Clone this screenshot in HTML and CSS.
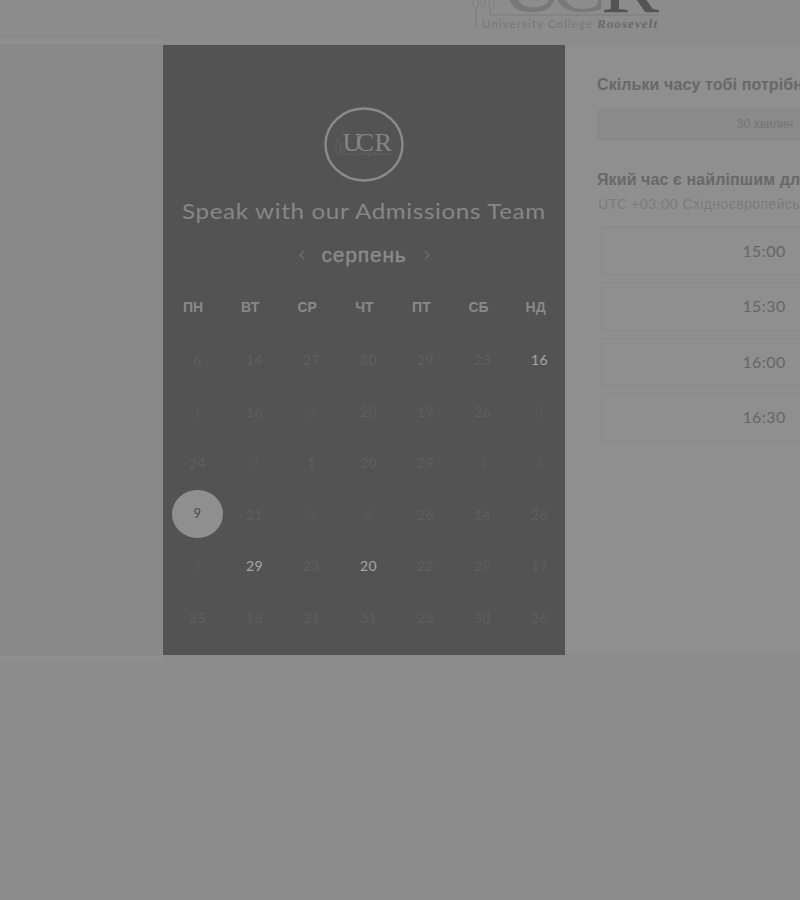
FILE: index.html
```
<!DOCTYPE html>
<html lang="uk">
<head>
<meta charset="utf-8">
<title>Speak with our Admissions Team</title>
<link rel="stylesheet" href="styles.css">
</head>
<body>
<header class="header">
  <svg class="brand" width="200" height="38" viewBox="0 0 200 38">
    <g class="brand-line">
      <path d="M3 0v5q2 5 5 1V0M11 0v6q3 3 4-1V0M19 0v7q3 3 5-1V0M6 8v21M20 8v7h168"/>
    </g>
    <text class="brand-light" x="29" y="11" font-size="82" textLength="66" lengthAdjust="spacingAndGlyphs">U</text>
    <text class="brand-light" x="80" y="11" font-size="82" textLength="56" lengthAdjust="spacingAndGlyphs">C</text>
    <text class="brand-dark" x="131" y="11.5" font-size="82" textLength="58" lengthAdjust="spacingAndGlyphs">R</text>
    <text class="brand-name" x="12" y="27.5" textLength="110">University College</text>
    <text class="brand-roosevelt" x="127" y="27.5" textLength="60">Roosevelt</text>
  </svg>
</header>
<main class="booking">
  <aside class="side"></aside>
  <section class="calendar">
    <svg class="avatar" width="80" height="76" viewBox="0 0 80 76">
      <ellipse cx="40" cy="37.500" rx="38.500" ry="36"/>
      <path class="avatar-mark" d="M12 45v-9l2-5 2 5v9M17 45v-6l2-3 1 3v6"/>
      <text class="avatar-text" x="18.500" y="43.500" textLength="19" lengthAdjust="spacingAndGlyphs">U</text>
      <text class="avatar-text" x="32" y="43.500" textLength="18" lengthAdjust="spacingAndGlyphs">C</text>
      <text class="avatar-text" x="50.500" y="43.500" textLength="17.500" lengthAdjust="spacingAndGlyphs">R</text>
      <text class="avatar-sub" x="14" y="48" textLength="53">University College Roosevelt</text>
    </svg>
    <h1 class="title"><span>Speak with our Admissions Team</span></h1>
    <div class="month">
      <svg width="8" height="12" viewBox="0 0 8 12"><path d="M6 2L2 6l4 4"/></svg>
      <span class="month-name">серпень</span>
      <svg width="8" height="12" viewBox="0 0 8 12"><path d="M2 2l4 4-4 4"/></svg>
    </div>
    <div class="weekdays"><span>ПН</span><span>ВТ</span><span>СР</span><span>ЧТ</span><span>ПТ</span><span>СБ</span><span>НД</span></div>
    <div class="days">
      <span>6</span><span>14</span><span>27</span><span>30</span><span>29</span><span>23</span><span class="open">16</span>
      <span class="faint">1</span><span>16</span><span class="faint">5</span><span>20</span><span>19</span><span>26</span><span class="faint">3</span>
      <span>24</span><span class="faint">2</span><span>1</span><span>20</span><span>29</span><span class="faint">4</span><span class="faint">4</span>
      <span class="selected"><b>9</b></span><span>21</span><span class="faint">3</span><span class="faint">2</span><span>26</span><span>14</span><span>26</span>
      <span class="faint">5</span><span class="open">29</span><span>23</span><span class="open">20</span><span>22</span><span>29</span><span>17</span>
      <span>25</span><span>18</span><span>21</span><span>31</span><span>23</span><span>30</span><span>26</span>
    </div>
  </section>
  <section class="times">
    <h2 class="question">Скільки часу тобі потрібно?</h2>
    <div class="duration">30 хвилин</div>
    <h2 class="question">Який час є найліпшим для тебе?</h2>
    <div class="zone"><span class="utc">UTC +03:00</span> Східноєвропейський час</div>
    <div class="slots">
      <div class="slot">15:00</div>
      <div class="slot">15:30</div>
      <div class="slot">16:00</div>
      <div class="slot">16:30</div>
    </div>
  </section>
</main>
</body>
</html>
```
FILE: styles.css
```
* { box-sizing: border-box; }
body {
  margin: 0;
  width: 800px;
  height: 900px;
  overflow: hidden;
  background: #8c8c8c;
  font-family: Lato, "Liberation Sans", sans-serif;
}
.header { height: 45px; padding-left: 470px; overflow: hidden; }
.brand { display: block; font-family: "Liberation Serif", serif; }
.brand-line { fill: none; stroke: #7d7d7d; stroke-width: 1; }
.brand-light { fill: #787878; }
.brand-dark { fill: #545454; }
.brand-name { fill: #777; font: 11.5px Lato, sans-serif; }
.brand-roosevelt { fill: #696969; font: italic bold 13px "Liberation Serif", serif; }

.booking { display: flex; width: 800px; height: 610px; }
.side {
  flex: none;
  width: 163px;
  border-right: 1px solid #8c8c8c;
  background: #888;
  box-shadow: -6px 0 0 1px #888, -6px 0 0 6px #8f8f8f;
}
.calendar {
  position: relative;
  flex: none;
  width: 402px;
  padding-top: 62px;
  background: #535353;
}
.avatar { display: block; margin: 0 auto; }
.avatar ellipse { fill: none; stroke: #8b8b8b; stroke-width: 2.4; }
.avatar-text { fill: #858585; font: 26px "Liberation Serif", serif; }
.avatar-sub { fill: #6d6d6d; font: 4px "Liberation Serif", serif; }
.avatar-mark { fill: none; stroke: #606060; }
.title {
  margin: 12px 0 0;
  height: 32px;
  padding-left: 19px;
  white-space: nowrap;
  font-size: 22px;
  font-weight: 400;
  line-height: 32px;
  letter-spacing: .6px;
  color: #878787;
}
.title span {
  display: inline-block;
  transform: scaleX(1.098);
  transform-origin: left;
}
.month {
  display: flex;
  align-items: center;
  justify-content: center;
  gap: 16px;
  height: 28px;
  margin-top: 14px;
  color: #8b8b8b;
}
.month svg { fill: none; stroke: #707070; stroke-width: 1.2; }
.month-name {
  width: 85px;
  text-align: center;
  font: 21px/28px "Liberation Sans", sans-serif;
  letter-spacing: .8px;
  -webkit-text-stroke: .4px #8b8b8b;
}
.weekdays {
  display: grid;
  grid-template-columns: repeat(7, 57.1px);
  margin: 28px 0 0 1.5px;
  height: 20px;
  text-align: center;
  color: #898989;
  font: bold 14px/20px "Liberation Sans", sans-serif;
}
.days {
  display: grid;
  grid-template-columns: repeat(7, 57px);
  grid-auto-rows: 51.6px;
  margin: 17px 0 0 6px;
  text-align: center;
  color: #5f5f5f;
  font-size: 14px;
  line-height: 52px;
  letter-spacing: .3px;
}
.days .faint { color: #5a5a5a; }
.days .open { color: #a6a6a6; }
.selected { display: flex; justify-content: center; }
.selected b {
  width: 51px;
  height: 48px;
  margin-top: 1px;
  border-radius: 50%;
  background: #8f8f8f;
  color: #4b4b4b;
  font-size: 13px;
  font-weight: 400;
  line-height: 46px;
}
.times {
  flex: 1;
  min-width: 0;
  padding: 29px 0 0 32px;
  background: #8f8f8f;
  border-bottom: 1px solid #898989;
  overflow: hidden;
}
.question {
  margin: 0;
  height: 22px;
  white-space: nowrap;
  font: bold 16px/22px "Liberation Sans", sans-serif;
  letter-spacing: .1px;
  color: #686868;
}
.duration {
  width: 336px;
  height: 31px;
  margin: 13px 0 29px;
  border-radius: 3px;
  background: #8a8a8a;
  border-bottom: 1px solid #868686;
  color: #757575;
  text-align: center;
  font: 12px/31px "Liberation Sans", sans-serif;
}
.zone {
  height: 22px;
  margin-top: 2px;
  padding-left: 1px;
  white-space: nowrap;
  color: #7b7b7b;
  font: 14px/22px "Liberation Sans", sans-serif;
  letter-spacing: .4px;
}
.utc { font-family: Lato, sans-serif; letter-spacing: .5px; }
.slots { display: grid; gap: 7px; margin: 12px 0 0 4px; width: 326px; }
.slot {
  height: 48.4px;
  border: 1px solid #888;
  border-radius: 2px;
  text-align: center;
  color: #666;
  font-size: 16px;
  line-height: 46px;
  letter-spacing: .4px;
}
```
